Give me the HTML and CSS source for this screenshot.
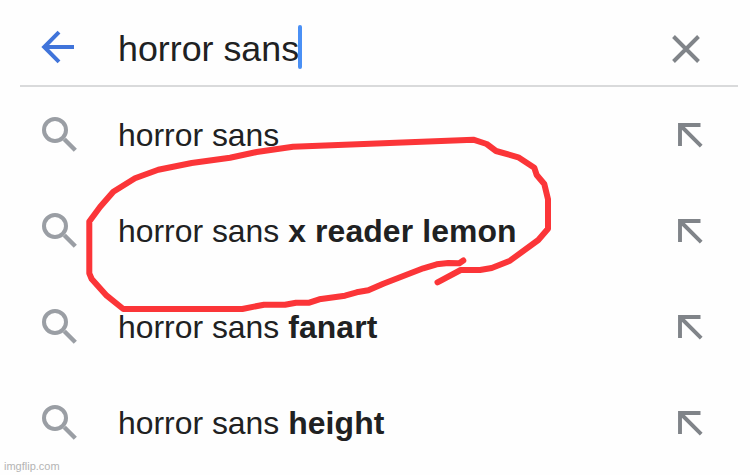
FILE: index.html
```html
<!DOCTYPE html>
<html lang="en">
  <head>
    <meta charset="UTF-8" />
    <meta name="viewport" content="width=device-width, initial-scale=1.0" />
    <title>horror sans</title>
    <link rel="stylesheet" href="styles.css">
  </head>
  <body>
    <svg class="symbols">
      <symbol id="search" viewBox="0 0 36 36">
        <circle cx="14" cy="14" r="11" fill="none" stroke="currentColor" stroke-width="4"></circle>
        <path d="M23.3 23.3L34.3 34.3" fill="none" stroke="currentColor" stroke-width="4.4"></path>
      </symbol>
      <symbol id="fill" viewBox="0 0 26 26">
        <path d="M23.5 3H3V24M3 3L24.2 24.2" fill="none" stroke="currentColor" stroke-width="3.9"></path>
      </symbol>
    </svg>
    <header class="searchbar">
      <svg class="back" viewBox="0 0 34 34">
        <path d="M33 17H4M18 2.2L3.2 17L18 31.8" fill="none" stroke="currentColor" stroke-width="4"></path>
      </svg>
      <div class="query">horror sans<span class="caret"></span></div>
      <svg class="clear" viewBox="0 0 30 30">
        <path d="M2.5 2.5L27.5 27.5M27.5 2.5L2.5 27.5" fill="none" stroke="currentColor" stroke-width="3.9"></path>
      </svg>
    </header>
    <ul class="suggestions">
      <li>
        <svg class="search"><use href="#search"></use></svg>
        <span class="text">horror sans</span>
        <svg class="fill"><use href="#fill"></use></svg>
      </li>
      <li>
        <svg class="search"><use href="#search"></use></svg>
        <span class="text">horror sans <b>x reader lemon</b></span>
        <svg class="fill"><use href="#fill"></use></svg>
      </li>
      <li>
        <svg class="search"><use href="#search"></use></svg>
        <span class="text">horror sans <b>fanart</b></span>
        <svg class="fill"><use href="#fill"></use></svg>
      </li>
      <li>
        <svg class="search"><use href="#search"></use></svg>
        <span class="text">horror sans <b>height</b></span>
        <svg class="fill"><use href="#fill"></use></svg>
      </li>
    </ul>
    <svg class="marker" viewBox="0 0 750 475">
      <path
        d="M437.5 282.3L460.7 270H480L491.7 268L510 260.7L538.3 240L548 228.7V199.3L544.3 184L536.7 175L534.3 167.7L518.3 157.3L496 151L486.7 144L473.3 139.7L293 146.7L256.7 152L230 157.7L191.7 163L158.3 169.7L135 178.3L113.3 191.7L100 207L89.3 221.5V273.3L91.7 279L106.7 295.7L123.3 309H242.3L264 304.7H285L296 302.7H309.3L319.3 299.3L345 295.7L356.7 292.3L368.3 290.3L383.3 283.7L423.3 268.3L436.7 264.3L448.3 263L459.3 263.3L463.3 260.5"
        fill="none"
        stroke="currentColor"
        stroke-linecap="round"
        stroke-linejoin="round"
        stroke-width="6"
      ></path>
    </svg>
    <div class="watermark">imgflip.com</div>
  </body>
</html>
```
FILE: styles.css
```css
:root {
  --color-primary: #4074da;
  --color-caret: #4a90f5;
  --color-marker: #fb3538;

  --body-color: #202122;
  --icon-color: #808489;
  --search-color: #9a9ea4;
  --border-color: #d9dadb;
}

body {
  position: relative;
  height: 475px;
  margin: 0;
  overflow: hidden;
  color: var(--body-color);
  background: #fefefe;
  font-family: 'Liberation Sans', Arial, Helvetica, sans-serif;
}

svg {
  display: block;
  flex: none;
}

.symbols {
  display: none;
}

.searchbar {
  display: flex;
  align-items: center;
  height: 85px;
  margin: 0 12px 0 20px;
  padding: 0 37px 0 21px;
  border-bottom: 2px solid var(--border-color);
  box-sizing: content-box;
}

.back {
  width: 34px;
  height: 34px;
  margin: 9px 43px 0 0;
  color: var(--color-primary);
}

.query {
  display: flex;
  align-items: center;
  flex: 1;
  padding-top: 13px;
  font-size: 35.8px;
  line-height: 44px;
}

.caret {
  width: 4px;
  height: 44px;
  margin: -4px 0 0 -1px;
  border-radius: 2px;
  background: var(--color-caret);
}

.clear {
  width: 30px;
  height: 30px;
  margin-top: 13px;
  color: var(--icon-color);
}

.suggestions {
  margin: 0;
  padding: 0;
  list-style: none;
}

.suggestions li {
  display: flex;
  align-items: center;
  height: 96px;
  padding: 0 47px 0 41px;
}

.search {
  width: 36px;
  height: 36px;
  margin: 0 41px 2px 0;
  color: var(--search-color);
}

.text {
  flex: 1;
  font-size: 31.9px;
  line-height: 40px;
}

.text b {
  letter-spacing: .12px;
}

.fill {
  width: 26px;
  height: 26px;
  color: var(--icon-color);
}

/* hand-drawn circle over the list */
.marker {
  position: absolute;
  top: 0;
  left: 0;
  width: 750px;
  height: 475px;
  color: var(--color-marker);
  pointer-events: none;
}

.watermark {
  position: absolute;
  left: 4px;
  bottom: 2px;
  color: #b4b4b4;
  font-size: 11px;
  line-height: 13px;
}
```
